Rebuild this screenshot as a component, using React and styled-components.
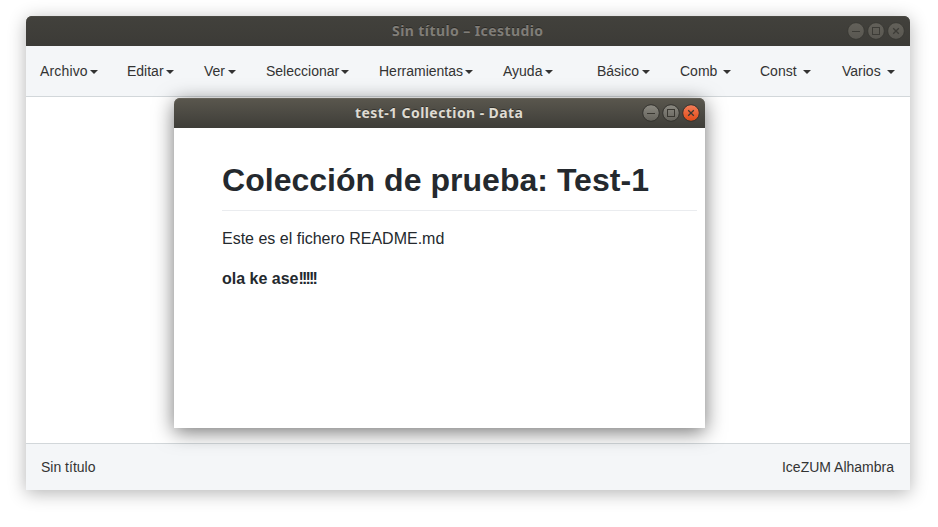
import React from "react";
import styled, { createGlobalStyle } from "styled-components";

const GlobalStyle = createGlobalStyle`
  * { box-sizing: border-box; }
  body { margin: 0; background: #fff; }
`;

const Desktop = styled.div`
  position: relative;
  width: 938px;
  height: 527px;
  padding: 16px 28px 37px 26px;
  overflow: hidden;
  background: #fff;
  font-family: "Liberation Sans", Arial, sans-serif;
`;

const MainWindow = styled.div`
  display: flex;
  flex-direction: column;
  height: 474px;
  border-radius: 6px 6px 0 0;
  background: #fff;
  box-shadow: 0 3px 18px rgba(0, 0, 0, 0.3);
`;

const Dialog = styled.div`
  position: absolute;
  left: 174px;
  top: 98px;
  width: 531px;
  height: 330px;
  border-radius: 6px 6px 0 0;
  background: #fff;
  box-shadow: 0 4px 20px rgba(0, 0, 0, 0.55);
`;

const TitleBar = styled.div`
  display: grid;
  grid-template-columns: 1fr auto;
  align-items: center;
  flex: none;
  height: 30px;
  padding-right: 5px;
  border-radius: 6px 6px 0 0;
  background: ${(p) =>
    p.$active
      ? "linear-gradient(#5a574e, #3e3d38)"
      : "linear-gradient(#42413c, #3c3b37)"};
  box-shadow: inset 0 1px 0 ${(p) => (p.$active ? "#66635a" : "#494842")};
`;

const Title = styled.div`
  padding-left: ${(p) => p.$indent}px;
  font: 700 14px/30px "Noto Sans", "Open Sans", sans-serif;
  letter-spacing: 0.42px;
  white-space: nowrap;
  color: ${(p) => (p.$active ? "#dfdbd2" : "#807d78")};
  text-shadow: 0 -1px 0 rgba(0, 0, 0, 0.35);
`;

const Controls = styled.div`
  display: flex;
  gap: 2px;
`;

const ControlIcon = styled.svg`
  display: block;
  width: 18px;
  height: 18px;
`;

const Toolbar = styled.div`
  display: grid;
  grid-template-columns: 87px 77px 62px 113px 124px 94px 83px 80px 82px 1fr;
  flex: none;
  height: 51px;
  padding-left: 14px;
  background: #f4f6f8;
  border-bottom: 1px solid #d2d7da;
`;

const MenuItem = styled.div`
  display: flex;
  align-items: center;
  justify-content: space-between;
  width: ${(p) => p.$width}px;
  height: 50px;
  font-size: 14px;
  letter-spacing: ${(p) => p.$spacing || 0}px;
  color: #333;
`;

const Caret = styled.span`
  flex: none;
  margin-top: 2px;
  border-top: 4px solid #333;
  border-left: 4px solid transparent;
  border-right: 4px solid transparent;
`;

const Canvas = styled.div`
  flex: 1;
`;

const Footer = styled.div`
  display: flex;
  justify-content: space-between;
  flex: none;
  height: 47px;
  padding: 0 16px 0 15px;
  border-top: 1px solid #d2d7da;
  background: #f4f6f8;
  color: #333;
  font-size: 14px;
  line-height: 46px;
`;

const Readme = styled.div`
  padding: 32px 8px 0 48px;
  color: #24292e;
  font-size: 16px;
  line-height: 24px;
`;

const Heading = styled.h1`
  height: 51px;
  margin: 0 0 16px;
  border-bottom: 1px solid #eaecef;
  font-size: 32px;
  line-height: 40px;
  letter-spacing: 0.03px;
  white-space: nowrap;
`;

const Paragraph = styled.p`
  margin: 0 0 16px;
  font-weight: ${(p) => (p.$bold ? 700 : 400)};
`;

const Tight = styled.span`
  letter-spacing: -1.8px;
`;

const glyphs = {
  minimize: <path d="M5 9.5h8" />,
  maximize: <rect x="5.5" y="5.5" width="7" height="7" />,
  close: <path d="M6.2 6.2l5.6 5.6M11.8 6.2l-5.6 5.6" />,
};

function Control({ kind, active }) {
  const hot = active && kind === "close";
  const id = `${kind}-${active ? "on" : "off"}`;
  const [from, to] = hot
    ? ["#f37e5a", "#df4a16"]
    : active
    ? ["#8b8981", "#64625b"]
    : ["#63615a", "#595751"];
  return (
    <ControlIcon viewBox="0 0 18 18">
      <defs>
        <linearGradient id={id} x1="0" y1="0" x2="0" y2="1">
          <stop offset="0" stopColor={from} />
          <stop offset="1" stopColor={to} />
        </linearGradient>
      </defs>
      <circle cx="9" cy="9" r="8.3" fill={`url(#${id})`} stroke="#33322e" strokeWidth="1" strokeOpacity={active ? 1 : 0.65} />
      <g fill="none" stroke={active ? "#393731" : "#3d3c37"} strokeWidth={kind === "close" ? 1.3 : 1}>
        {glyphs[kind]}
      </g>
    </ControlIcon>
  );
}

function WindowBar({ title, active, indent }) {
  return (
    <TitleBar $active={active}>
      <Title $active={active} $indent={indent}>{title}</Title>
      <Controls>
        <Control kind="minimize" active={active} />
        <Control kind="maximize" active={active} />
        <Control kind="close" active={active} />
      </Controls>
    </TitleBar>
  );
}

const menus = [
  ["Archivo", 58, 0.15],
  ["Editar", 47],
  ["Ver", 32],
  ["Seleccionar", 83],
  ["Herramientas", 94],
  ["Ayuda", 50],
  ["Básico", 53],
  ["Comb", 51],
  ["Const", 51],
  ["Varios", 53],
];

export default function App() {
  return (
    <Desktop>
      <GlobalStyle />
      <MainWindow>
        <WindowBar title="Sin título – Icestudio" indent={366} />
        <Toolbar>
          {menus.map(([label, width, spacing]) => (
            <MenuItem key={label} $width={width} $spacing={spacing}>
              {label}
              <Caret />
            </MenuItem>
          ))}
        </Toolbar>
        <Canvas />
        <Footer>
          <span>Sin título</span>
          <span>IceZUM Alhambra</span>
        </Footer>
      </MainWindow>
      <Dialog>
        <WindowBar title="test-1 Collection - Data" active indent={181} />
        <Readme>
          <Heading>Colección de prueba: Test-1</Heading>
          <Paragraph>Este es el fichero README.md</Paragraph>
          <Paragraph $bold>
            ola ke ase<Tight>!!!!!</Tight>
          </Paragraph>
        </Readme>
      </Dialog>
    </Desktop>
  );
}
